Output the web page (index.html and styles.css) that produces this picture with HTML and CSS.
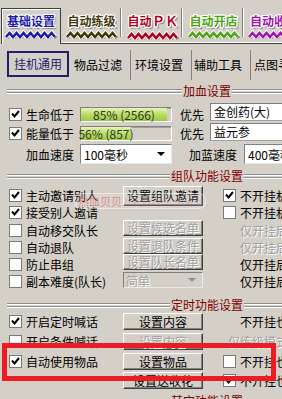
FILE: index.html
```html
<!DOCTYPE html>
<html lang="zh-CN">
<head>
    <meta charset="UTF-8">
    <meta name="viewport" content="width=device-width, initial-scale=1.0">
    <title>基础设置</title>
    <link rel="stylesheet" href="styles.css">
</head>
<body>
<svg class="defs" width="0" height="0">
    <defs>
        <symbol id="zz" viewBox="0 0 52 9">
            <polyline points="1,7 4.5,3 8,7 11.5,3 15,7 18.5,3 22,7 25.5,3 29,7 32.5,3 36,7 39.5,3 43,7 46.5,3 50,7" fill="none" stroke="#8a8a8a" stroke-width="3" transform="translate(1,1)"/>
            <polyline points="1,7 4.5,3 8,7 11.5,3 15,7 18.5,3 22,7 25.5,3 29,7 32.5,3 36,7 39.5,3 43,7 46.5,3 50,7" fill="none" stroke="#fff" stroke-width="4.5"/>
            <polyline points="1,7 4.5,3 8,7 11.5,3 15,7 18.5,3 22,7 25.5,3 29,7 32.5,3 36,7 39.5,3 43,7 46.5,3 50,7" fill="none" stroke="currentColor" stroke-width="2.6"/>
        </symbol>
        <symbol id="ck" viewBox="0 0 11 11">
            <path d="M2 4.5 L4.5 7.5 L9 2" fill="none" stroke="#000" stroke-width="2"/>
        </symbol>
    </defs>
</svg>

<div class="page">
    <!-- main tabs -->
    <div class="tabs">
        <div class="tab on c1"><span class="tt">基础设置</span><svg class="zz"><use href="#zz"/></svg></div>
        <div class="tab c2"><span class="tt">自动练级</span><svg class="zz"><use href="#zz"/></svg></div>
        <div class="tab c3"><span class="tt">自动<b>ＰＫ</b></span><svg class="zz"><use href="#zz"/></svg></div>
        <div class="tab c4"><span class="tt">自动开店</span><svg class="zz"><use href="#zz"/></svg></div>
        <div class="tab c5"><span class="tt">自动收花</span><svg class="zz"><use href="#zz"/></svg></div>
        <div class="tabrest"></div>
    </div>

    <!-- sub tabs -->
    <div class="subtabs">
        <div class="st sel">挂机通用</div>
        <div class="st s2">物品过滤</div>
        <div class="st s3">环境设置</div>
        <div class="st s4">辅助工具</div>
        <div class="st s5">点图寻路</div>
    </div>

    <!-- 加血设置 -->
    <div class="gt g1"><span>加血设置</span></div>
    <div class="row hp1">
        <span class="cb"><svg><use href="#ck"/></svg></span>
        <span class="lbl">生命低于</span>
        <div class="bar"><div class="fill" style="width:86px"><span>85% (2566)</span></div></div>
        <span class="pri">优先</span>
        <div class="edit">金创药(大)</div>
    </div>
    <div class="row hp2">
        <span class="cb"><svg><use href="#ck"/></svg></span>
        <span class="lbl">能量低于</span>
        <div class="bar"><div class="fill" style="width:50px"><span>56% (857)</span></div></div>
        <span class="pri">优先</span>
        <div class="edit">益元参</div>
    </div>
    <div class="row hp3">
        <span class="lbl">加血速度</span>
        <div class="combo"><span>100毫秒</span><i class="arrow"></i></div>
        <span class="lbl mp">加蓝速度</span>
        <div class="combo c2w"><span>400毫秒</span><i class="arrow"></i></div>
    </div>

    <!-- 组队功能设置 -->
    <div class="gt g2"><span>组队功能设置</span></div>
    <div class="grid team">
        <div class="ck"><span class="cb"><svg><use href="#ck"/></svg></span>主动邀请别人</div>
        <div class="btn big">设置组队邀请</div>
        <div></div>
        <div class="ck"><span class="cb"><svg><use href="#ck"/></svg></span>不开挂机也邀请</div>

        <div class="ck"><span class="cb"><svg><use href="#ck"/></svg></span>接受别人邀请</div>
        <div></div>
        <div></div>
        <div class="ck"><span class="cb"></span>不开挂机也接受</div>

        <div class="ck"><span class="cb"></span>自动移交队长</div>
        <div class="btn off">设置候选名单</div>
        <div></div>
        <div class="note off">仅开挂后有效</div>

        <div class="ck"><span class="cb"></span>自动退队</div>
        <div class="btn off">设置退队条件</div>
        <div></div>
        <div class="note off">仅开挂后有效</div>

        <div class="ck"><span class="cb"></span>防止串组</div>
        <div class="btn off">设置队长名单</div>
        <div></div>
        <div class="note">仅开挂后有效</div>

        <div class="ck"><span class="cb"></span>副本难度(队长)</div>
        <div class="combo off"><span>简单</span><i class="arrow"></i></div>
        <div></div>
        <div class="note">仅开挂后有效</div>
    </div>

    <!-- 定时功能设置 -->
    <div class="gt g3"><span>定时功能设置</span></div>
    <div class="grid timer">
        <div class="ck"><span class="cb"><svg><use href="#ck"/></svg></span>开启定时喊话</div>
        <div class="btn">设置内容</div>
        <div></div>
        <div class="note">不开挂也喊话</div>

        <div class="ck"><span class="cb"></span>开启条件喊话</div>
        <div class="btn off">设置内容</div>
        <div></div>
        <div class="note off near">仅练级模式时有效</div>

        <div class="ck"><span class="cb"><svg><use href="#ck"/></svg></span>自动使用物品</div>
        <div class="btn">设置物品</div>
        <div></div>
        <div class="ck"><span class="cb"></span>不开挂也使用</div>

        <div></div>
        <div class="btn">设置送收花</div>
        <div></div>
        <div class="ck"><span class="cb"><svg><use href="#ck"/></svg></span>不开挂也送花</div>
    </div>

    <div class="gt g4"><span>其它功能设置</span></div>

    <div class="mark">热血贝贝 <em>beibei.net</em></div>
    <div class="redbox"></div>
</div>
</body>
</html>
```

FILE: styles.css
```css
html, body {
    margin: 0;
    width: 282px;
    height: 399px;
    overflow: hidden;
}

body {
    background-color: #d4d0c8;
    font-family: "Noto Sans CJK SC", "Noto Sans", sans-serif;
    font-size: 12px;
    color: #000;
}

.defs {
    position: absolute;
}

.page {
    position: relative;
    width: 420px;
}

/* main tabs */
.tabs {
    display: flex;
    height: 44px;
    padding-top: 8px;
    box-sizing: border-box;
}

.tab {
    width: 61px;
    height: 36px;
    box-sizing: border-box;
    display: flex;
    flex-direction: column;
    align-items: center;
    padding-top: 6px;
    border-bottom: 1px solid #404040;
    box-shadow: inset 0 -1px 0 #fff;
    background:
        linear-gradient(#808080, #808080) right 1px top 0 / 1px 29px no-repeat,
        linear-gradient(#fff, #fff) right 0 top 0 / 1px 29px no-repeat;
}

.tab.on {
    width: 60px;
    margin-left: 1px;
    border: 1px solid #404040;
    border-bottom: 0;
    box-shadow: inset 1px 1px 0 #fff;
    padding-top: 5px;
    background: none;
}

.tab.c5 {
    width: 60px;
}

.tabrest {
    flex: 1;
    height: 36px;
    box-sizing: border-box;
    border-bottom: 1px solid #404040;
    box-shadow: inset 0 -1px 0 #fff;
}

.tt {
    font-weight: bold;
    line-height: 14px;
    white-space: nowrap;
    text-shadow:
        1px 0 #fff, -1px 0 #fff, 0 1px #fff, 0 -1px #fff,
        1px 1px #fff, -1px -1px #fff, 1px -1px #fff, -1px 1px #fff,
        2px 2px #8a8a8a;
}

.tt b {
    font-family: "Liberation Serif", serif;
    font-size: 13px;
}

.zz {
    width: 52px;
    height: 9px;
    margin-top: 2px;
}

.c1 { color: #1c1ca8; }
.c2 { color: #3e3a0c; }
.c3 { color: #b0001c; }
.c4 { color: #4ca414; }
.c5 { color: #a412b4; }

/* sub tabs */
.subtabs {
    display: flex;
    height: 36px;
    padding-top: 6px;
    box-sizing: border-box;
}

.st {
    height: 30px;
    line-height: 30px;
    padding-left: 4px;
    box-sizing: border-box;
    border-right: 1px solid #808080;
    white-space: nowrap;
}

.st.sel {
    width: 62px;
    height: 26px;
    margin: 1px 0 0 7px;
    padding: 0;
    border: 2px solid #261c70;
    line-height: 22px;
    text-align: center;
    color: #261c70;
}

.s2 { width: 62px; padding-left: 5px; }
.s3 { width: 61px; }
.s4 { width: 59px; padding-left: 2px; }
.s5 { width: 90px; padding-left: 3px; border-right: 0; }

/* group titles */
.gt {
    width: 400px;
    height: 14px;
    margin-left: 7px;
    line-height: 14px;
    text-align: center;
    color: #800000;
    background: linear-gradient(to bottom,
        transparent 5px, #909090 5px, #909090 6px, #fff 6px, #fff 7px,
        transparent 7px, transparent 8px, #909090 8px, #909090 9px, #fff 9px, #fff 10px,
        transparent 10px);
}

.gt span {
    background-color: #d4d0c8;
    padding: 0 1px;
}

.g1 { margin-top: 4px; }
.g2 { margin-top: 5px; }
.g3 { margin-top: 8px; }
.g4 { margin-top: 4px; }

/* common controls */
.cb {
    width: 13px;
    height: 13px;
    flex: none;
    box-sizing: border-box;
    border: 1px solid #7a7a7a;
    background-color: #fff;
    margin-right: 4px;
}

.cb svg {
    display: block;
    width: 11px;
    height: 11px;
}

.row {
    display: flex;
    align-items: center;
    padding-left: 9px;
    white-space: nowrap;
}

.lbl {
    width: 48px;
}

.hp1 { height: 20px; margin-top: 6px; }
.hp2 { height: 18px; }
.hp3 { height: 20px; margin-top: 2px; padding-left: 26px; }

.bar {
    width: 92px;
    height: 15px;
    margin-left: 6px;
    box-sizing: border-box;
    border: 1px solid #808080;
    border-right-color: #fff;
    border-bottom-color: #fff;
    box-shadow: inset 1px 1px 0 #a0a0a0;
}

.fill {
    height: 13px;
    display: flex;
    justify-content: center;
    background: linear-gradient(#e6f5b4, #b8de64 50%, #9acb42);
    line-height: 13px;
    color: #333;
}

.fill span {
    white-space: nowrap;
}

.pri {
    margin-left: 8px;
}

.edit {
    align-self: flex-start;
    margin: -1px 0 0 6px;
    width: 120px;
    height: 18px;
    box-sizing: border-box;
    padding-left: 3px;
    line-height: 16px;
    background-color: #fff;
    border: 1px solid #808080;
    border-right-color: #d4d0c8;
    border-bottom-color: #a0a0a0;
}

.combo {
    width: 92px;
    height: 20px;
    margin-left: 6px;
    box-sizing: border-box;
    display: flex;
    align-items: center;
    justify-content: space-between;
    padding: 0 6px 0 3px;
    background-color: #fff;
    border: 1px solid #808080;
    border-right-color: #e8e8e8;
    border-bottom-color: #e8e8e8;
}

.arrow {
    width: 0;
    height: 0;
    border-left: 4px solid transparent;
    border-right: 4px solid transparent;
    border-top: 4px solid #000;
}

.lbl.mp {
    margin-left: 17px;
}

.combo.c2w {
    margin-left: 7px;
    width: 80px;
}

.btn {
    height: 17px;
    box-sizing: border-box;
    border: 1px solid;
    border-color: #fff #404040 #404040 #fff;
    box-shadow: inset -1px -1px 0 #808080;
    line-height: 15px;
    text-align: center;
    white-space: nowrap;
}

.off {
    color: #a0a0a0;
    text-shadow: 1px 1px 0 #fff;
}

.combo.off {
    width: 80px;
    height: 16px;
    margin: -1px 0 0;
    align-self: start;
    background-color: #d4d0c8;
    padding: 0 6px 0 2px;
}

.combo.off .arrow {
    border-top-color: #909090;
}

/* grid groups */
.grid {
    display: grid;
    grid-template-columns: 114px 80px 20px 200px;
    margin-left: 9px;
    align-items: center;
    white-space: nowrap;
}

.ck {
    display: flex;
    align-items: center;
}

.note {
    padding-left: 17px;
}

.note.near {
    padding-left: 5px;
}

.team {
    grid-template-rows: 18px 17px 18px 16px 18px 17px;
    margin-top: 3px;
}

.team .btn {
    align-self: start;
    height: 16px;
    margin-top: -1px;
    line-height: 14px;
}

.team .btn.big {
    height: 20px;
    margin-top: 0;
    line-height: 18px;
}

.timer {
    grid-template-rows: 19px 20px 20px 19px;
}

/* overlays */
.mark {
    position: absolute;
    left: 74px;
    top: 193px;
    height: 14px;
    padding: 0 3px;
    border: 1px solid rgba(255, 255, 255, 0.45);
    border-radius: 7px;
    background-color: rgba(255, 255, 255, 0.12);
    line-height: 14px;
    font-size: 11px;
    color: rgba(225, 70, 80, 0.55);
    white-space: nowrap;
}

.mark em {
    font-style: normal;
    font-family: "Liberation Sans", sans-serif;
    letter-spacing: 3px;
    color: rgba(225, 70, 80, 0.25);
}

.redbox {
    position: absolute;
    left: 2px;
    top: 343px;
    width: 274px;
    height: 38px;
    box-sizing: border-box;
    border: 5px solid #ed1c24;
}
```
